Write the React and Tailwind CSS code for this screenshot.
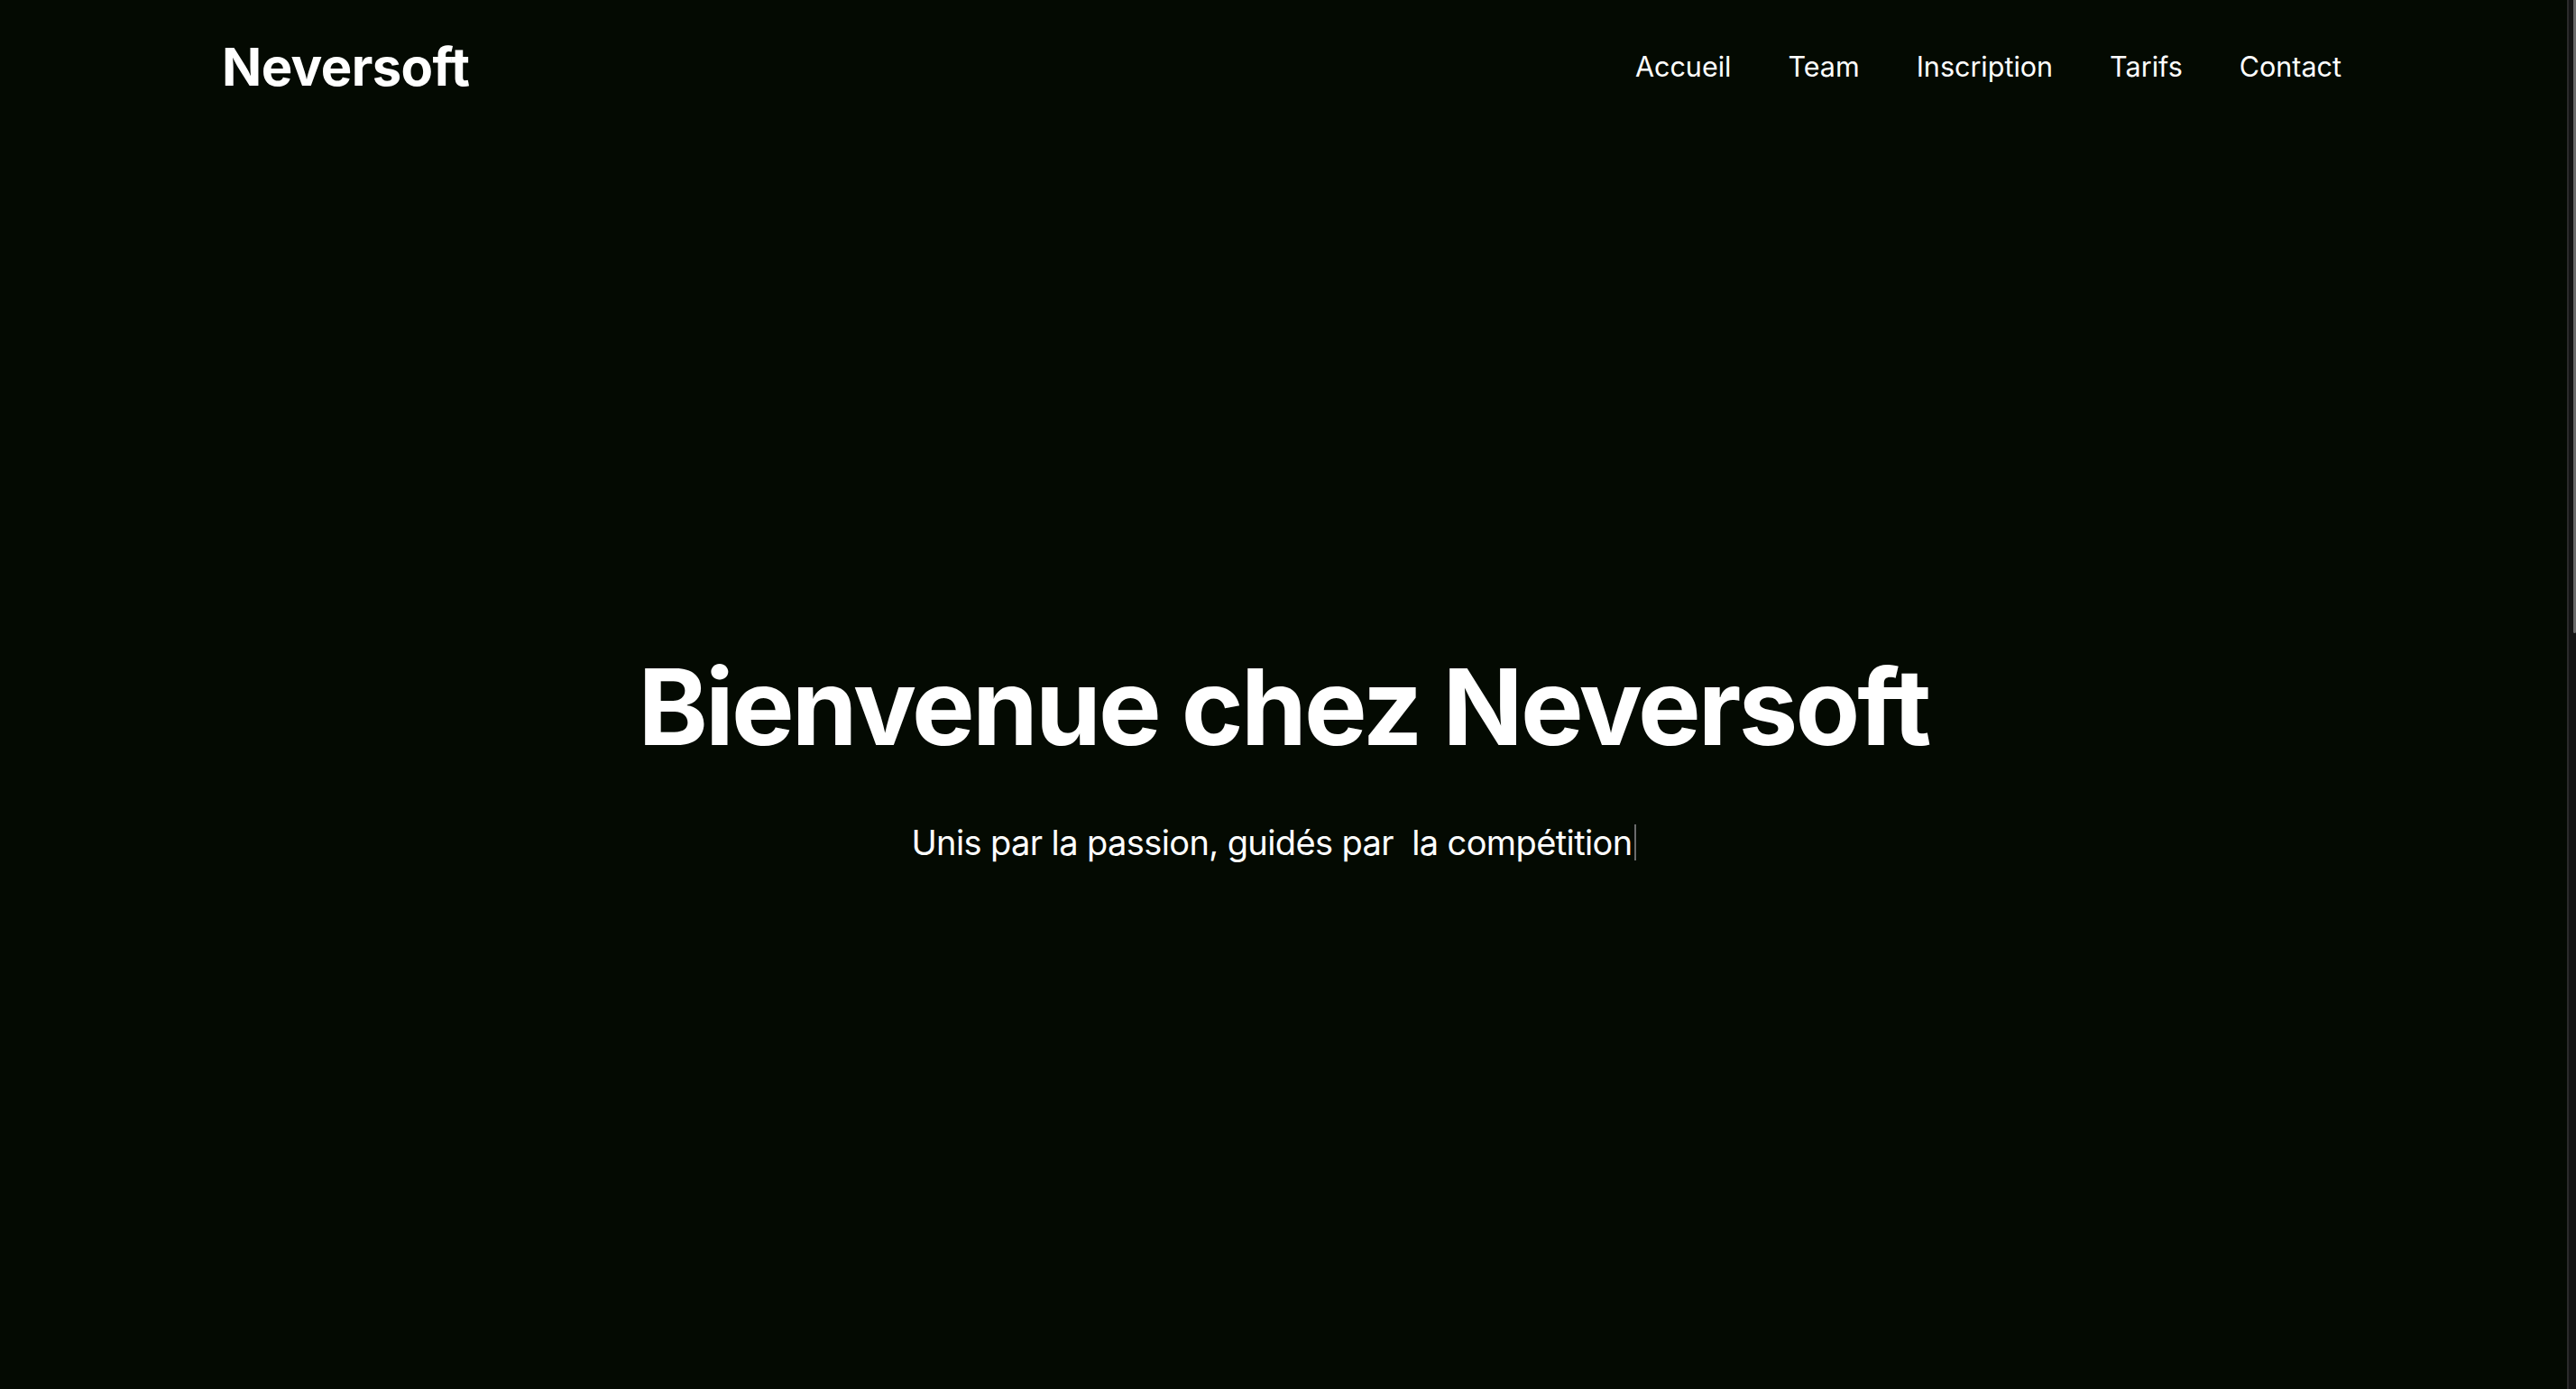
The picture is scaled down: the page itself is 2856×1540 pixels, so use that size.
import React from "react";

const links = ["Accueil", "Team", "Inscription", "Tarifs", "Contact"];

export default function App() {
  return (
    <div className="flex h-screen w-full overflow-hidden font-['Inter','Noto_Sans',sans-serif]">
      <div className="flex-1 bg-[#040a02] text-white">
        {/* header */}
        <header className="flex h-[148px] items-center justify-between pl-[246px] pr-[250px]">
          <a href="#" className="text-[58px] font-bold leading-none tracking-[-0.01em]">
            Neversoft
          </a>
          <nav className="flex items-center gap-[63px] text-[30.5px] leading-none">
            {links.map((l) => (
              <a key={l} href="#" className="hover:text-gray-300">
                {l}
              </a>
            ))}
          </nav>
        </header>

        {/* hero */}
        <section className="flex flex-col items-center pt-[577px]">
          <h1 className="text-[117px] font-bold leading-none tracking-[-0.024em]">
            Bienvenue chez Neversoft
          </h1>
          <p className="mt-[72px] mr-[22px] flex items-center whitespace-pre text-[38px] leading-none tracking-[-0.016em]">
            {"Unis par la passion, guidés par  la compétition"}
            <span className="ml-[2px] inline-block h-[40px] w-[2px] bg-[#6b6b6b]"></span>
          </p>
        </section>
      </div>

      {/* scrollbar */}
      <div className="flex w-[10px] justify-end border-l-2 border-[#2b2b2b] bg-[#151515]">
        <div className="h-[702px] w-[3px] rounded-b-sm bg-[#6a6a6a]"></div>
      </div>
    </div>
  );
}
